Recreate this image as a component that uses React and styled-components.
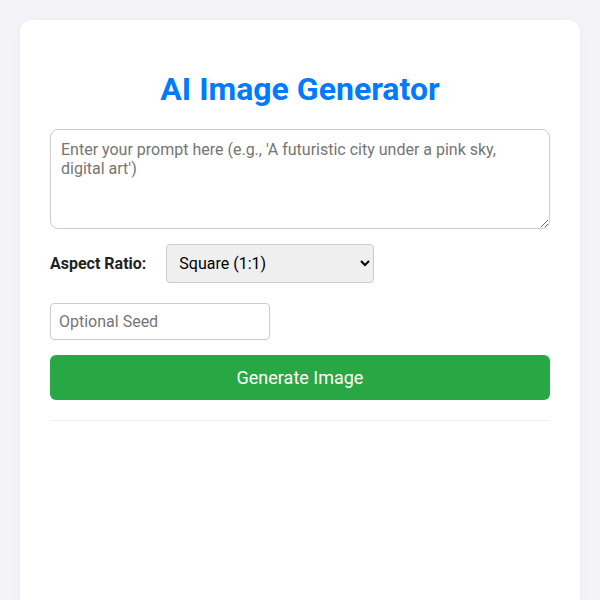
import React, { useState } from 'react';
import styled, { createGlobalStyle } from 'styled-components';

const GlobalStyle = createGlobalStyle`
  body {
    margin: 0;
    background: #f4f4f8;
    font-family: Roboto, "Liberation Sans", sans-serif;
  }
  * { box-sizing: border-box; }
`;

const Page = styled.div`
  padding: 20px 20px 0;
`;

const Card = styled.div`
  background: #fff;
  border-radius: 12px;
  padding: 30px 30px 200px;
  box-shadow: 0 2px 10px rgba(0, 0, 0, 0.05);
`;

const Title = styled.h1`
  margin: 20px 0 21px;
  font-size: 32px;
  font-weight: 700;
  color: #007bff;
  text-align: center;
`;

const Prompt = styled.textarea`
  display: block;
  width: 100%;
  height: 100px;
  padding: 10px;
  font: 16px Roboto, "Liberation Sans", sans-serif;
  border: 1px solid #ccc;
  border-radius: 8px;
  resize: vertical;
  &::placeholder { color: #757575; }
`;

const Row = styled.div`
  display: flex;
  align-items: center;
  gap: 20px;
  margin-top: ${p => p.$top}px;
`;

const Label = styled.label`
  font-size: 16px;
  font-weight: 700;
  color: #222;
`;

const Select = styled.select`
  width: 208px;
  height: 39px;
  padding: 0 8px;
  font: 16px Roboto, "Liberation Sans", sans-serif;
  color: #000;
  background: #efefef;
  border: 1px solid #ccc;
  border-radius: 4px;
`;

const Seed = styled.input`
  width: 220px;
  height: 37px;
  padding: 8px;
  font: 16px Roboto, "Liberation Sans", sans-serif;
  border: 1px solid #ccc;
  border-radius: 4px;
  &::placeholder { color: #757575; }
`;

const Button = styled.button`
  display: block;
  width: 100%;
  height: 45px;
  margin-top: 15px;
  font: 18px Roboto, "Liberation Sans", sans-serif;
  color: #fff;
  background: #28a745;
  border: none;
  border-radius: 6px;
  cursor: pointer;
`;

const Divider = styled.hr`
  margin: 20px 0 0;
  border: none;
  border-top: 1px solid #eee;
`;

export default function App() {
  let [ratio, setRatio] = useState('1:1');
  return (
    <>
      <GlobalStyle />
      <Page>
        <Card>
          <Title>AI Image Generator</Title>
          <Prompt placeholder="Enter your prompt here (e.g., 'A futuristic city under a pink sky, digital art')" />
          <Row $top={15}>
            <Label htmlFor="ratio">Aspect Ratio:</Label>
            <Select id="ratio" value={ratio} onChange={e => setRatio(e.target.value)}>
              <option value="1:1">Square (1:1)</option>
              <option value="16:9">Landscape (16:9)</option>
              <option value="9:16">Portrait (9:16)</option>
            </Select>
          </Row>
          <Row $top={20}>
            <Seed type="number" placeholder="Optional Seed" />
          </Row>
          <Button>Generate Image</Button>
          <Divider />
        </Card>
      </Page>
    </>
  );
}
